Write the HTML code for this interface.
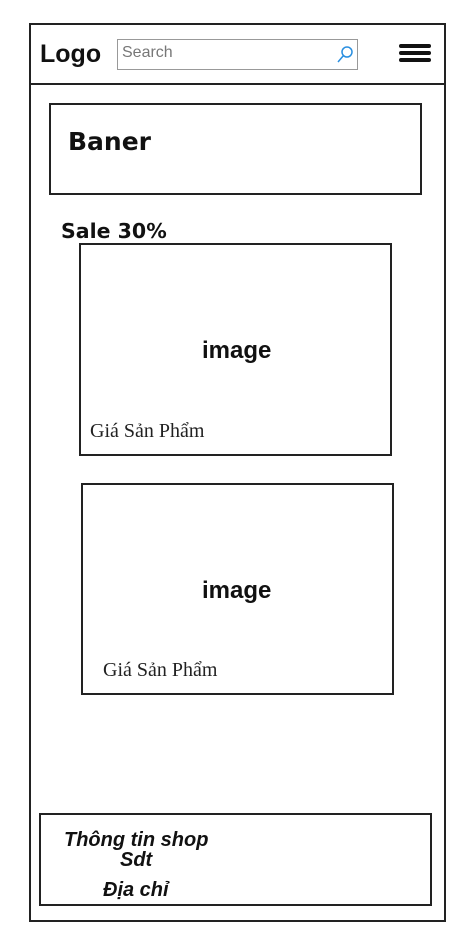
<!DOCTYPE html>
<html><head><meta charset="utf-8"><style>
body{margin:0;width:470px;height:943px;background:#fff;position:relative;overflow:hidden;font-family:"Liberation Sans",sans-serif}
.a{position:absolute;box-sizing:border-box}
.t{position:absolute;white-space:nowrap;line-height:1}
</style></head><body>
<div class="a" style="left:29px;top:23px;width:417px;height:899px;border:2px solid #222"></div>
<div class="a" style="left:30px;top:83px;width:415px;height:2px;background:#222"></div>
<div class="t" style="left:40px;top:42px;font-size:25px;font-weight:bold;color:#111">Logo</div>
<div class="a" style="left:117px;top:39px;width:241px;height:31px;border:1px solid #999"></div>
<div class="t" style="left:122px;top:45px;font-size:16px;color:#777">Search</div>
<svg class="a" style="left:336px;top:44px" width="20" height="20"><circle cx="11" cy="8" r="5" fill="none" stroke="#2a8fe0" stroke-width="1.5"/><line x1="7.5" y1="11.5" x2="2" y2="18" stroke="#2a8fe0" stroke-width="1.5"/></svg>
<div class="a" style="left:399px;top:44px;width:32px;height:4px;background:#111;border-radius:2px"></div>
<div class="a" style="left:399px;top:51px;width:32px;height:4px;background:#111;border-radius:2px"></div>
<div class="a" style="left:399px;top:58px;width:32px;height:4px;background:#111;border-radius:2px"></div>
<div class="a" style="left:49px;top:103px;width:373px;height:92px;border:2px solid #222"></div>
<div class="t" style="left:68px;top:129px;font-size:25px;font-weight:bold;font-family:'DejaVu Sans',sans-serif;color:#111">Baner</div>
<div class="t" style="left:61px;top:221px;font-size:20.5px;font-weight:bold;font-family:'DejaVu Sans',sans-serif;color:#111">Sale 30%</div>
<div class="a" style="left:79px;top:243px;width:313px;height:213px;border:2px solid #222"></div>
<div class="t" style="left:202px;top:339px;font-size:24px;font-weight:bold;color:#111">image</div>
<div class="t" style="left:90px;top:421px;font-size:20px;font-family:'Liberation Serif',serif;color:#222">Giá Sản Phẩm</div>
<div class="a" style="left:81px;top:483px;width:313px;height:212px;border:2px solid #222"></div>
<div class="t" style="left:202px;top:579px;font-size:24px;font-weight:bold;color:#111">image</div>
<div class="t" style="left:103px;top:660px;font-size:20px;font-family:'Liberation Serif',serif;color:#222">Giá Sản Phẩm</div>
<div class="a" style="left:39px;top:813px;width:393px;height:93px;border:2px solid #222"></div>
<div class="t" style="left:64px;top:830px;font-size:20px;font-weight:bold;font-style:italic;color:#111">Thông tin shop</div>
<div class="t" style="left:120px;top:850px;font-size:20px;font-weight:bold;font-style:italic;color:#111">Sdt</div>
<div class="t" style="left:103px;top:880px;font-size:20px;font-weight:bold;font-style:italic;color:#111">Địa chỉ</div>
</body></html>
